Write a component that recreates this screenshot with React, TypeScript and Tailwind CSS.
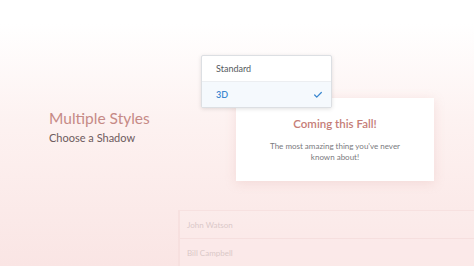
import { Check } from "lucide-react";

const font = { fontFamily: "Lato, 'Open Sans', sans-serif" };

export default function App() {
    return (
        <div
            style={font}
            className="w-[474px] h-[266px] overflow-hidden bg-[linear-gradient(to_bottom,#ffffff_0%,#ffffff_9%,#fdf2f1_45%,#fae5e4_100%)]"
        >
            <div className="flex">
                {/* Left heading */}
                <div className="w-[201px] shrink-0 pl-[49px] pt-[108px]">
                    <div className="text-[15.5px] leading-[20px] text-[#c68a86]">Multiple Styles</div>
                    <div className="mt-[3px] text-[11px] leading-[14px] text-[#6d5b5d]">Choose a Shadow</div>
                </div>

                {/* Dropdown + card */}
                <div className="pt-[55px]">
                    <div className="relative z-10 w-[131px] rounded-[2px] border border-[#dcdfe3] bg-white shadow-[0_1px_4px_rgba(0,0,0,0.12)]">
                        <div className="h-[26px] flex items-center pl-[14px] text-[9px] text-[#555a60] border-b border-[#eceef1]">
                            Standard
                        </div>
                        <div className="h-[25px] flex items-center justify-between pl-[14px] pr-[8px] bg-[#f5f9fd] text-[9px] font-semibold text-[#3a87d0]">
                            <span>3D</span>
                            <Check size={10} strokeWidth={3} className="text-[#3a87d0]" />
                        </div>
                    </div>
                    <div className="ml-[35px] -mt-[10px] w-[198px] h-[83px] bg-white shadow-[0_2px_10px_rgba(220,160,155,0.25)] flex flex-col items-center pt-[18px]">
                        <div className="text-[11.5px] leading-[16px] font-semibold text-[#c57d77]">Coming this Fall!</div>
                        <div className="mt-[9px] text-[8px] leading-[11px] text-[#7a7a7e] text-center w-[140px]">
                            The most amazing thing you've never known about!
                        </div>
                    </div>
                </div>
            </div>

            {/* Faded list */}
            <div className="ml-[178px] mt-[29px] border-l-2 border-t border-[#f6dedd] bg-[#fdefee]/60 opacity-70">
                <div className="h-[28px] flex items-center pl-[7px] text-[8px] text-[#cdbbbb] border-b border-[#f4dcdb]">
                    John Watson
                </div>
                <div className="h-[28px] flex items-center pl-[7px] text-[8px] text-[#cdbbbb]">
                    Bill Campbell
                </div>
            </div>
        </div>
    );
}
